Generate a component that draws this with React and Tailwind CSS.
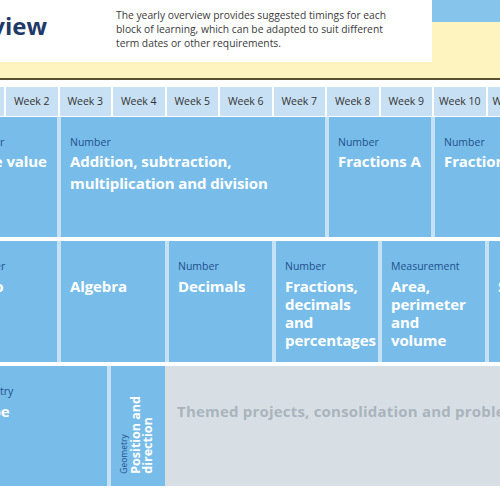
const WEEKS = [1, 2, 3, 4, 5, 6, 7, 8, 9, 10, 11, 12];

const ROWS = [
  {
    lead: 'leading-[22px]',
    gap: 'mt-[2px]',
    blocks: [
      { w: 'w-[104.5px]', pl: 'pl-[11px]', label: 'Number', title: 'Place value' },
      { w: 'w-[264px]', label: 'Number', title: 'Addition, subtraction,\nmultiplication and division' },
      { w: 'w-[102px]', label: 'Number', title: 'Fractions A' },
      { w: 'w-[160px]', label: 'Number', title: 'Fractions B' },
    ],
  },
  {
    lead: 'leading-[18px]',
    gap: 'mt-[5px]',
    blocks: [
      { w: 'w-[104.5px]', pl: 'pl-[12px]', label: 'Number', title: 'Ratio' },
      { w: 'w-[104px]', label: '', title: 'Algebra' },
      { w: 'w-[103px]', label: 'Number', title: 'Decimals' },
      { w: 'w-[102px]', label: 'Number', title: 'Fractions,\ndecimals\nand\npercentages' },
      { w: 'w-[103px]', label: 'Measurement', title: 'Area,\nperimeter\nand\nvolume' },
      { w: 'w-[110px]', label: '', title: 'Statistics' },
    ],
  },
];

function Block({ w, pl = 'pl-[9px]', label, title, lead, gap = 'mt-[2px]' }) {
  return (
    <div className={`${w} ${pl} shrink-0 overflow-hidden bg-[#78bde9] pt-[19px]`}>
      <div className="h-[12px] text-[10.5px] leading-[12px] text-[#1f4f8c] whitespace-nowrap">{label}</div>
      <div className={`${gap} text-[15px] ${lead} font-bold tracking-[-0.1px] text-white whitespace-pre`}>{title}</div>
    </div>
  );
}

export default function App() {
  return (
    <div className="w-[500px] h-[500px] overflow-hidden bg-white font-['Open_Sans',sans-serif]">
      {/* header */}
      <div className="flex h-[62px]">
        <div className="w-[432px] flex bg-white">
          <div className="w-[47px] overflow-hidden flex justify-end pt-[14px]">
            <h1 className="whitespace-nowrap text-[24px] leading-[24px] font-bold text-[#1f3a68]">Yearly overview</h1>
          </div>
          <p className="ml-[69px] pt-[8px] text-[10.3px] leading-[14px] text-[#3a3a3a] whitespace-nowrap">
            The yearly overview provides suggested timings for each
            <br />
            block of learning, which can be adapted to suit different
            <br />
            term dates or other requirements.
          </p>
        </div>
        <div className="flex-1 flex flex-col">
          <div className="h-[22px] bg-[#87c4eb]" />
          <div className="flex-1 bg-[#fdf4c0]" />
        </div>
      </div>
      <div className="h-[16px] bg-[#fdf4c0]" />
      <div className="h-[2px] bg-[#58502f]" />

      <div className="mt-[7px] ml-[-47.5px] w-[700px]">
        {/* weeks */}
        <div className="flex gap-[2px] h-[29px]">
          {WEEKS.map((n) => (
            <div key={n} className="w-[51.5px] shrink-0 bg-[#c8e0f4] flex items-center justify-center text-[10.5px] text-[#333] whitespace-nowrap">
              Week {n}
            </div>
          ))}
        </div>

        <div className="mt-[1px] flex flex-col gap-[4px]">
          {ROWS.map((row, i) => (
            <div key={i} className={`flex gap-[4px] bg-[#c5e1f6] ${i === 0 ? 'h-[120px]' : 'h-[121px]'}`}>
              {row.blocks.map((b) => (
                <Block key={b.title} {...b} lead={row.lead} gap={row.gap} />
              ))}
            </div>
          ))}

          {/* summer */}
          <div className="flex h-[120px] bg-[#c5e1f6]">
            <div className="mr-[4px] flex">
              <Block w="w-[154.5px]" pl="pl-[12px]" label="Geometry" title="Shape" lead="leading-[22px]" gap="mt-[3px]" />
            </div>
            <div className="w-[54px] shrink-0 bg-[#78bde9] flex flex-col justify-end items-start pl-[7px] pb-[12px]">
              <div className="[writing-mode:vertical-rl] rotate-180">
                <div className="text-[8.5px] leading-[12px] text-[#1f4f8c] whitespace-nowrap">Geometry</div>
                <div className="text-[12.5px] leading-[12px] font-bold text-white whitespace-nowrap pl-[1px]">
                  Position and
                  <br />
                  direction
                </div>
              </div>
            </div>
            <div className="flex-1 bg-[#d8dfe4] pl-[12px] pt-[19px]">
              <div className="h-[12px]" />
              <div className="mt-[3px] text-[15px] leading-[22px] font-bold tracking-[0.2px] text-[#a9b4bd] whitespace-nowrap">
                Themed projects, consolidation and problem solving
              </div>
            </div>
          </div>
        </div>
      </div>
    </div>
  );
}
